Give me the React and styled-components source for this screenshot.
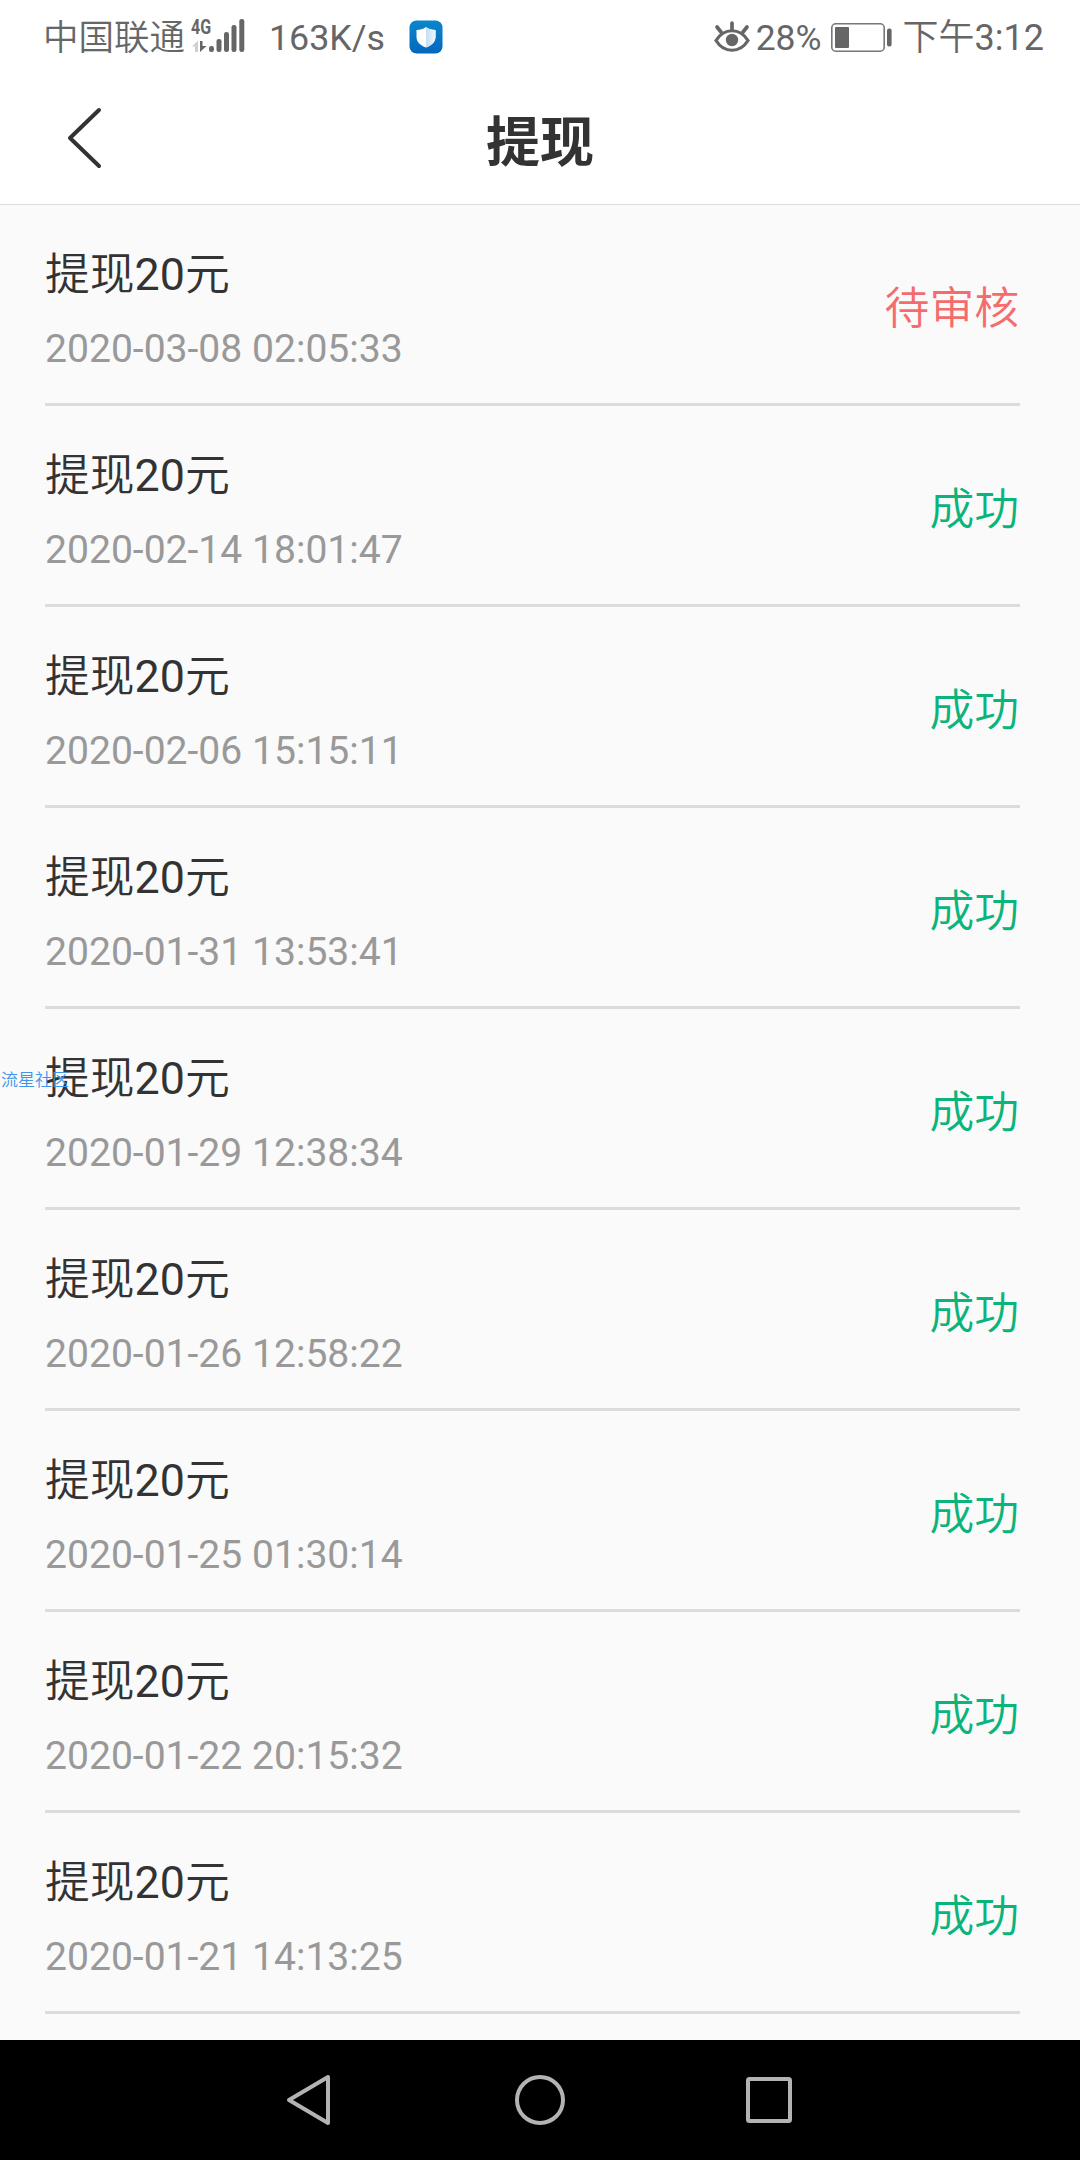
import React from "react";
import styled, { createGlobalStyle } from "styled-components";

const records = [
  { amount: 20, time: "2020-03-08 02:05:33", status: "待审核", pending: true },
  { amount: 20, time: "2020-02-14 18:01:47", status: "成功" },
  { amount: 20, time: "2020-02-06 15:15:11", status: "成功" },
  { amount: 20, time: "2020-01-31 13:53:41", status: "成功" },
  { amount: 20, time: "2020-01-29 12:38:34", status: "成功", mark: "流星社区" },
  { amount: 20, time: "2020-01-26 12:58:22", status: "成功" },
  { amount: 20, time: "2020-01-25 01:30:14", status: "成功" },
  { amount: 20, time: "2020-01-22 20:15:32", status: "成功" },
  { amount: 20, time: "2020-01-21 14:13:25", status: "成功" },
];

function SignalIcon() {
  return (
    <svg width="56" height="36" viewBox="0 0 56 36" fill="#666">
      <path d="M7 21.500 1 27.500h3V33h3z" fill="#d0d0d0" />
      <path d="M9 22h2.500v5h4L9 33z" />
      <rect x="18" y="27" width="5" height="6" rx="2.300" />
      <rect x="25.500" y="20" width="5" height="13" rx="2.300" />
      <rect x="33" y="13" width="5" height="20" rx="2.300" />
      <rect x="40.500" y="6" width="5" height="27" rx="2.300" />
      <rect x="48.300" y="0" width="5" height="33" rx="2.300" />
    </svg>
  );
}

function ShieldIcon() {
  return (
    <svg width="34" height="34" viewBox="0 0 34 34">
      <defs>
        <linearGradient id="tile" x1="0" y1="0" x2="0" y2="1">
          <stop offset="0" stopColor="#0a86cc" />
          <stop offset="1" stopColor="#0468bd" />
        </linearGradient>
        <linearGradient id="shade" x1="0" y1="0" x2="1" y2="0">
          <stop offset="0" stopColor="#c3def2" />
          <stop offset="1" stopColor="#eef7fd" />
        </linearGradient>
      </defs>
      <rect x="0.500" y="0.500" width="33" height="33" rx="7" fill="url(#tile)" />
      <path d="M17 7c3 2.200 6 3 9.500 3v7c0 5-4 8.500-9.500 10.500C11.500 25.500 7.500 22 7.500 17v-7C11 10 14 9.200 17 7z" fill="#fff" />
      <path d="M17 7c3 2.200 6 3 9.500 3v7c0 5-4 8.500-9.500 10.500z" fill="url(#shade)" />
    </svg>
  );
}

function EyeIcon() {
  return (
    <svg width="36" height="33" viewBox="0 0 36 33" fill="none" stroke="#666" strokeWidth="3.200" strokeLinecap="round">
      <path d="M2 19.500C10 6.500 26 6.500 34 19.500 26 32.500 10 32.500 2 19.500z" />
      <path d="M18 2v7M3 6l4 5M33 6l-4 5" strokeWidth="3.700" />
      <circle cx="18" cy="19" r="6.200" fill="#666" stroke="none" />
    </svg>
  );
}

function BatteryIcon() {
  return (
    <svg width="61" height="29" viewBox="0 0 61 29" fill="#666">
      <rect x="0.800" y="0.800" width="52.400" height="27.400" rx="4" fill="none" stroke="#777" strokeWidth="1.600" />
      <rect x="4" y="4" width="14" height="21" rx="1" />
      <rect x="56" y="5.500" width="4.600" height="18" rx="2" />
    </svg>
  );
}

function Record(props) {
  return (
    <Row>
      <div>
        <RowTitle>
          提现<Digits>{props.amount}</Digits>元
          {props.mark && <Mark>{props.mark}</Mark>}
        </RowTitle>
        <Time>{props.time}</Time>
      </div>
      <Status $pending={props.pending}>{props.status}</Status>
    </Row>
  );
}

function App() {
  return (
    <Page>
      <GlobalStyle />
      <StatusBar>
        <Carrier>中国联通</Carrier>
        <Signal>
          <SignalIcon />
          <Network>4G</Network>
        </Signal>
        <Speed>163K/s</Speed>
        <ShieldIcon />
        <Right>
          <EyeIcon />
          <Percent>28%</Percent>
          <BatteryIcon />
          <Clock>
            下午<Digits>3:12</Digits>
          </Clock>
        </Right>
      </StatusBar>
      <Header>
        <Back aria-label="返回">
          <svg width="40" height="64" viewBox="0 0 40 64" fill="none" stroke="#333" strokeWidth="4" strokeLinecap="round" strokeLinejoin="round">
            <path d="M35 4 6 32l29 28" />
          </svg>
        </Back>
        <Title>提现</Title>
      </Header>
      <List>
        {records.map((record) => (
          <Record key={record.time} {...record} />
        ))}
      </List>
      <NavBar>
        <svg width="50" height="54" viewBox="0 0 50 54">
          <path d="M42 4v46L3 27z" />
        </svg>
        <svg width="54" height="54" viewBox="0 0 54 54">
          <circle cx="27" cy="27" r="23" />
        </svg>
        <svg width="50" height="54" viewBox="0 0 50 54">
          <rect x="4" y="6" width="42" height="42" rx="1.500" />
        </svg>
      </NavBar>
    </Page>
  );
}

export default App;

const GlobalStyle = createGlobalStyle`
  body {
    margin: 0;
  }

  svg {
    display: block;
    flex-shrink: 0;
  }
`;

const Page = styled.div`
  display: flex;
  flex-direction: column;
  width: 1080px;
  height: 2160px;
  overflow: hidden;
  background: #fafafa;
  font-family: Roboto, "Noto Sans CJK SC", sans-serif;
`;

const StatusBar = styled.div`
  display: flex;
  align-items: center;
  box-sizing: border-box;
  height: 72px;
  padding: 2px 36px 0 43px;
  background: #fff;
  color: #666;
  font-size: 36px;
  font-weight: 350;
  line-height: 42px;
  white-space: nowrap;

  > span,
  > div > span {
    padding-top: 2px;
  }
`;

const Carrier = styled.span`
  width: 144px;
  font-size: 35.5px;
`;

const Signal = styled.div`
  position: relative;
  margin-left: 4px;
`;

const Network = styled.span`
  position: absolute;
  top: -4px;
  left: 0;
  font-size: 20px;
  font-weight: 700;
  line-height: 20px;
  transform: scaleX(0.8);
  transform-origin: left;
`;

const Speed = styled.span`
  width: 116px;
  margin: 0 24px 0 22px;
  font-size: 35.8px;
  font-weight: 400;
`;

const Right = styled.div`
  display: flex;
  align-items: center;
  margin-left: auto;
`;

const Percent = styled.span`
  margin: 0 9px 0 6px;
  font-size: 35.5px;
  font-weight: 400;
`;

const Clock = styled.span`
  margin-left: 11px;
  font-size: 36px;
`;

const Header = styled.header`
  display: flex;
  align-items: center;
  box-sizing: border-box;
  height: 133px;
  padding: 0 64px;
  border-bottom: 1px solid #dcdcdc;
  background: #fff;
`;

const Back = styled.button`
  width: 40px;
  padding: 0;
  border: 0;
  background: none;
`;

const Title = styled.h1`
  flex: 1;
  margin: 0 40px 0 0;
  padding-top: 11px;
  color: #333;
  font-size: 54px;
  font-weight: 700;
  line-height: 64px;
  text-align: center;
`;

const List = styled.div`
  flex: 1;
  padding: 0 60px 0 45px;
`;

const Row = styled.div`
  display: flex;
  align-items: center;
  justify-content: space-between;
  box-sizing: border-box;
  height: 201px;
  padding-top: 12px;
  border-bottom: 3px solid #dcdcdc;
`;

const RowTitle = styled.div`
  position: relative;
  padding-top: 1px;
  color: #333;
  font-size: 44.8px;
  font-weight: 350;
  line-height: 60px;
`;

const Digits = styled.span`
  font-weight: 400;
`;

const Mark = styled.span`
  position: absolute;
  top: 20px;
  left: -44px;
  color: #3d96ee;
  font-size: 17px;
  line-height: 24px;
`;

const Time = styled.div`
  margin-top: 17px;
  color: #999;
  font-size: 39.1px;
  line-height: 54px;
`;

const Status = styled.div`
  padding: 0 1px 2px 0;
  color: ${(props) => (props.$pending ? "#f56c6c" : "#0bb47a")};
  font-size: 44.8px;
  font-weight: 350;
  line-height: 60px;
`;

const NavBar = styled.nav`
  display: flex;
  align-items: center;
  justify-content: space-between;
  height: 120px;
  padding: 0 286px;
  background: #000;
  fill: none;
  stroke: #b3b3b3;
  stroke-width: 4px;
  stroke-linejoin: round;
`;
